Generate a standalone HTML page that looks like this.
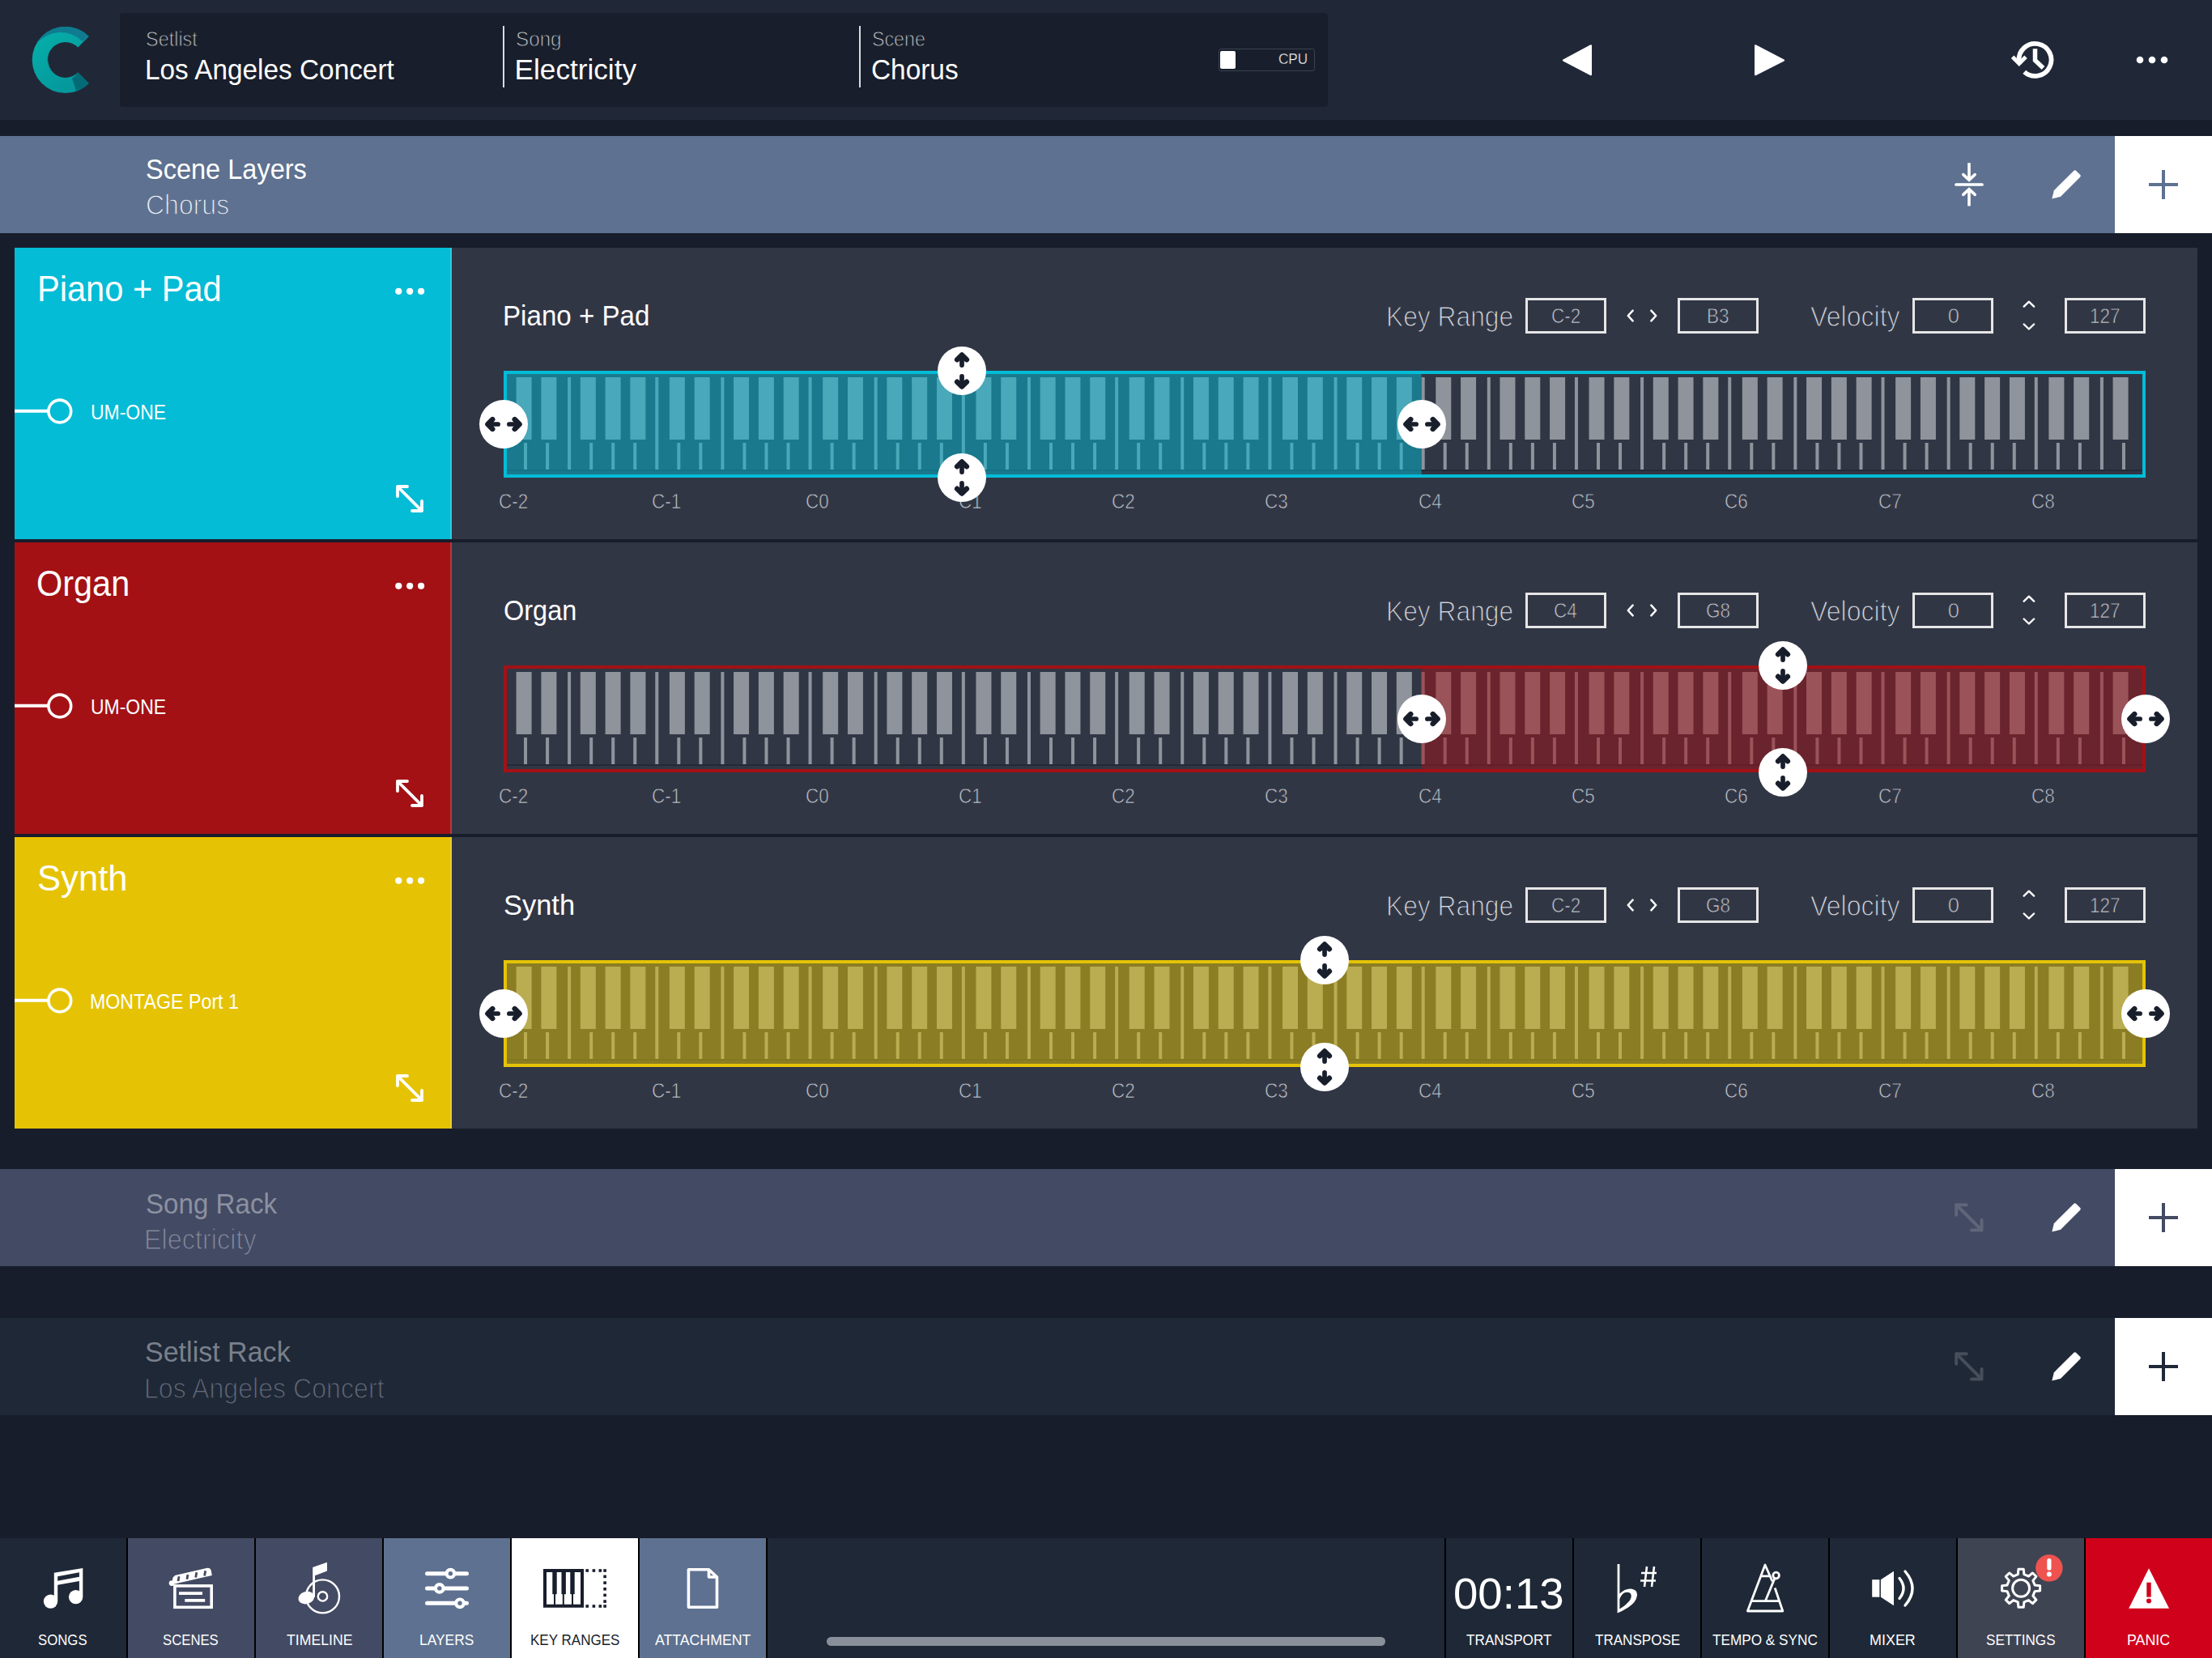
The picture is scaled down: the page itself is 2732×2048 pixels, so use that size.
<!DOCTYPE html><html><head><meta charset="utf-8"><style>
*{margin:0;padding:0;box-sizing:border-box}
html,body{width:2732px;height:2048px;overflow:hidden;background:#181d2b;font-family:"Liberation Sans",sans-serif}
.a{position:absolute}
.t{position:absolute;white-space:nowrap;line-height:1}
svg{position:absolute;overflow:visible}
.box{position:absolute;border:3px solid #e6e6e6}
</style></head><body>
<div class="a" style="left:0;top:0;width:2732px;height:148px;background:#202838"></div>
<div class="a" style="left:148px;top:16px;width:1492px;height:116px;background:#181e2b;border-radius:4px"></div>
<svg style="left:30px;top:25px" width="100" height="100" viewBox="30 25 100 100">
<defs><linearGradient id="lg" x1="0" y1="0" x2="0.6" y2="1">
<stop offset="0" stop-color="#06b1aa"/><stop offset="1" stop-color="#05979c"/></linearGradient></defs>
<path d="M109.7 45.0 A41 41 0 1 0 109.7 103.0 L96.3 89.6 A22 22 0 1 1 96.3 58.4 Z" fill="url(#lg)"/>
<path d="M45.2 53.5 A41 41 0 0 1 109.7 45.0 L101.8 50.9 A39.15 39.15 0 0 0 45.2 53.5 Z" fill="#0f7b90"/>
<path d="M61.4 62.4 A24.9 24.9 0 0 0 69.7 93.1 A22 22 0 0 1 61.4 62.4 Z" fill="#07908e"/>
<path d="M89.1 96.8 L94.2 112.5 A41 41 0 0 0 109.7 103.0 L96.3 89.6 A22 22 0 0 1 89.1 96.8 Z" fill="#026b76"/>
</svg>
<div class="a" style="left:621px;top:32px;width:2px;height:76px;background:#d8dce2"></div>
<div class="a" style="left:1061px;top:32px;width:2px;height:76px;background:#d8dce2"></div>
<div class="t" style="left:179.60px;top:36.35px;font-size:25.58px;transform:scaleX(0.9163);transform-origin:0 0;color:#c4c8cf;-webkit-text-stroke:0.9px #181e2b;">Setlist</div>
<div class="t" style="left:179.15px;top:68.42px;font-size:35.17px;transform:scaleX(0.9487);transform-origin:0 0;color:#ffffff;">Los Angeles Concert</div>
<div class="t" style="left:636.96px;top:36.35px;font-size:25.58px;transform:scaleX(0.9471);transform-origin:0 0;color:#c4c8cf;-webkit-text-stroke:0.9px #181e2b;">Song</div>
<div class="t" style="left:635.60px;top:68.42px;font-size:35.17px;color:#ffffff;">Electricity</div>
<div class="t" style="left:1077.11px;top:36.35px;font-size:25.58px;transform:scaleX(0.9086);transform-origin:0 0;color:#c4c8cf;-webkit-text-stroke:0.9px #181e2b;">Scene</div>
<div class="t" style="left:1076.49px;top:68.42px;font-size:35.17px;transform:scaleX(0.9493);transform-origin:0 0;color:#ffffff;">Chorus</div>
<div class="a" style="left:1504.5px;top:60px;width:119px;height:27.6px;border:1.8px solid #3a4150;border-radius:3px"></div>
<div class="a" style="left:1507px;top:62.9px;width:18.6px;height:22px;background:#fff;border-radius:2px"></div>
<div class="t" style="left:1579.37px;top:64.05px;font-size:18.60px;transform:scaleX(0.9210);transform-origin:0 0;color:#ffffff;-webkit-text-stroke:0.4px #181e2b;">CPU</div>
<svg style="left:1920px;top:50px" width="300" height="50" viewBox="1920 50 300 50"><path d="M1966 56.5 L1966 92 Q1966 94 1964 93 L1930.5 75.5 Q1929 74.5 1930.5 73.5 L1964 55.5 Q1966 54.5 1966 56.5Z" fill="#fff"/><path d="M2167 56.5 L2167 92 Q2167 94 2169 93 L2203.5 75.5 Q2205 74.5 2203.5 73.5 L2169 55.5 Q2167 54.5 2167 56.5Z" fill="#fff"/></svg>
<svg style="left:2470px;top:40px" width="80" height="70" viewBox="2470 40 80 70"><path d="M2493.53 75.5 A20 20 0 1 1 2500.25 88.9" fill="none" stroke="#fff" stroke-width="5.8"/><path d="M2483.9 72.1 L2493.85 82 L2503.8 72.1 L2500.3 68.6 L2493.85 75 L2487.4 68.6 Z" fill="#fff"/><path d="M2513.5 60.3 V74.5 L2523.5 84" fill="none" stroke="#fff" stroke-width="5.5"/></svg>
<svg style="left:2630px;top:64px" width="60" height="20" viewBox="2630 64 60 20"><circle cx="2643" cy="74" r="4.3" fill="#fff"/><circle cx="2658" cy="74" r="4.3" fill="#fff"/><circle cx="2673" cy="74" r="4.3" fill="#fff"/></svg>
<div class="a" style="left:0;top:168px;width:2612px;height:120px;background:#5e7190"></div>
<div class="a" style="left:2612px;top:168px;width:120px;height:120px;background:#fff"></div>
<div class="t" style="left:179.90px;top:192.49px;font-size:34.74px;transform:scaleX(0.9362);transform-origin:0 0;color:#ffffff;">Scene Layers</div>
<div class="t" style="left:179.98px;top:236.08px;font-size:35.47px;transform:scaleX(0.9022);transform-origin:0 0;color:#eef1f5;-webkit-text-stroke:1.3px #5e7190;">Chorus</div>
<svg style="left:2400px;top:195px" width="70" height="70" viewBox="2400 195 70 70"><path d="M2416 228 H2448" stroke="#fff" stroke-width="3.7" stroke-linecap="round"/><path d="M2432 201.2 V221 M2432 235 V254.6" stroke="#fff" stroke-width="3.6"/><path d="M2424.8 215.6 L2432 222.3 L2439.2 215.6 M2424.8 240.4 L2432 233.7 L2439.2 240.4" fill="none" stroke="#fff" stroke-width="3.6" stroke-linecap="round"/></svg>
<svg style="left:2525px;top:200px" width="55" height="55" viewBox="2525 200 55 55"><path d="M2534.3 245.4 L2536.9 235.2 L2561.2 210.9 Q2562.7 209.6 2564.2 210.9 L2569.1 215.8 Q2570.4 217.3 2569.1 218.8 L2544.9 243.0 Z" fill="#fff"/></svg>
<svg style="left:2650px;top:206px" width="44" height="44" viewBox="2650 206 44 44"><path d="M2654 228 H2690 M2672 210 V246" stroke="#5e7190" stroke-width="4"/></svg>
<div class="a" style="left:18px;top:306px;width:2696px;height:360px;background:#313645"></div>
<div class="a" style="left:18px;top:306px;width:540px;height:360px;background:#04bcd6"></div>
<div class="a" style="left:556px;top:306px;width:2px;height:360px;background:rgba(255,255,255,0.18)"></div>
<div class="t" style="left:46.29px;top:334.84px;font-size:43.90px;transform:scaleX(0.9475);transform-origin:0 0;color:#ffffff;">Piano + Pad</div>
<svg style="left:480px;top:350px" width="50" height="20" viewBox="480 350 50 20"><circle cx="492.3" cy="359.8" r="4.1" fill="#fff"/><circle cx="506.2" cy="359.8" r="4.1" fill="#fff"/><circle cx="520.1" cy="359.8" r="4.1" fill="#fff"/></svg>
<svg style="left:18px;top:490px" width="80" height="36" viewBox="18 490 80 36"><path d="M18 507.7 H60" stroke="#fff" stroke-width="4"/><circle cx="73.8" cy="508" r="13.9" fill="none" stroke="#fff" stroke-width="3.6"/></svg>
<div class="t" style="left:111.60px;top:496.67px;font-size:25.44px;transform:scaleX(0.9023);transform-origin:0 0;color:#ffffff;">UM-ONE</div>
<svg style="left:487.00px;top:597.00px" width="40.00" height="40.00" viewBox="0 0 40 40"><path d="M4 16V4H16M4 4L34 34M22 34H34V22" fill="none" stroke="#ffffff" stroke-width="3.8" stroke-linecap="round" stroke-linejoin="round"/></svg>
<div class="t" style="left:620.54px;top:372.77px;font-size:34.88px;transform:scaleX(0.9501);transform-origin:0 0;color:#ffffff;">Piano + Pad</div>
<div class="t" style="left:1712.09px;top:372.60px;font-size:35.32px;transform:scaleX(0.8992);transform-origin:0 0;color:#d4d7dc;-webkit-text-stroke:1.2px #313645;">Key Range</div>
<div class="box" style="left:1884px;top:368px;width:100px;height:44px"></div>
<div class="t" style="left:1915.92px;top:378.35px;font-size:25.58px;transform:scaleX(0.8800);transform-origin:0 0;color:#c8ccd2;-webkit-text-stroke:0.75px #313645;">C-2</div>
<div class="box" style="left:2072px;top:368px;width:100px;height:44px"></div>
<div class="t" style="left:2107.83px;top:378.35px;font-size:25.58px;transform:scaleX(0.8800);transform-origin:0 0;color:#c8ccd2;-webkit-text-stroke:0.75px #313645;">B3</div>
<div class="box" style="left:2362px;top:368px;width:100px;height:44px"></div>
<div class="t" style="left:2405.63px;top:378.35px;font-size:25.58px;color:#c8ccd2;-webkit-text-stroke:0.75px #313645;">0</div>
<div class="box" style="left:2550px;top:368px;width:100px;height:44px"></div>
<div class="t" style="left:2580.99px;top:378.35px;font-size:25.58px;transform:scaleX(0.8800);transform-origin:0 0;color:#c8ccd2;-webkit-text-stroke:0.75px #313645;">127</div>
<svg style="left:2000px;top:380px" width="56" height="20" viewBox="2000 380 56 20"><path d="M2016.6 383.7 L2010.8 390 L2016.6 396.3 M2039.4 383.7 L2045.2 390 L2039.4 396.3" fill="none" stroke="#fff" stroke-width="2.5" stroke-linecap="round" stroke-linejoin="round"/></svg>
<div class="t" style="left:2235.82px;top:372.90px;font-size:35.32px;transform:scaleX(0.9091);transform-origin:0 0;color:#d4d7dc;-webkit-text-stroke:1.2px #313645;">Velocity</div>
<svg style="left:2490px;top:368px" width="32" height="44" viewBox="2490 368 32 44"><path d="M2499.7 378.7 L2505.9 372.7 L2512.1 378.7 M2499.7 400.5 L2505.9 406.5 L2512.1 400.5" fill="none" stroke="#fff" stroke-width="2.4" stroke-linecap="round" stroke-linejoin="round"/></svg>
<svg class="kb" style="left:622.0px;top:458px" width="2028.0" height="132" viewBox="0 0 2028.0 132"><rect x="4" y="122" width="2020.0" height="2" fill="#232a38"/><g fill="#8f949c"><rect x="25.04" y="89" width="4" height="33"/><rect x="52.08" y="89" width="4" height="33"/><rect x="79.12" y="8" width="4" height="114"/><rect x="106.16" y="89" width="4" height="33"/><rect x="133.20" y="89" width="4" height="33"/><rect x="160.24" y="89" width="4" height="33"/><rect x="187.28" y="8" width="4" height="114"/><rect x="214.32" y="89" width="4" height="33"/><rect x="241.36" y="89" width="4" height="33"/><rect x="268.40" y="8" width="4" height="114"/><rect x="295.44" y="89" width="4" height="33"/><rect x="322.48" y="89" width="4" height="33"/><rect x="349.52" y="89" width="4" height="33"/><rect x="376.56" y="8" width="4" height="114"/><rect x="403.60" y="89" width="4" height="33"/><rect x="430.64" y="89" width="4" height="33"/><rect x="457.68" y="8" width="4" height="114"/><rect x="484.72" y="89" width="4" height="33"/><rect x="511.76" y="89" width="4" height="33"/><rect x="538.80" y="89" width="4" height="33"/><rect x="565.84" y="8" width="4" height="114"/><rect x="592.88" y="89" width="4" height="33"/><rect x="619.92" y="89" width="4" height="33"/><rect x="646.96" y="8" width="4" height="114"/><rect x="674.00" y="89" width="4" height="33"/><rect x="701.04" y="89" width="4" height="33"/><rect x="728.08" y="89" width="4" height="33"/><rect x="755.12" y="8" width="4" height="114"/><rect x="782.16" y="89" width="4" height="33"/><rect x="809.20" y="89" width="4" height="33"/><rect x="836.24" y="8" width="4" height="114"/><rect x="863.28" y="89" width="4" height="33"/><rect x="890.32" y="89" width="4" height="33"/><rect x="917.36" y="89" width="4" height="33"/><rect x="944.40" y="8" width="4" height="114"/><rect x="971.44" y="89" width="4" height="33"/><rect x="998.48" y="89" width="4" height="33"/><rect x="1025.52" y="8" width="4" height="114"/><rect x="1052.56" y="89" width="4" height="33"/><rect x="1079.60" y="89" width="4" height="33"/><rect x="1106.64" y="89" width="4" height="33"/><rect x="1133.68" y="8" width="4" height="114"/><rect x="1160.72" y="89" width="4" height="33"/><rect x="1187.76" y="89" width="4" height="33"/><rect x="1214.80" y="8" width="4" height="114"/><rect x="1241.84" y="89" width="4" height="33"/><rect x="1268.88" y="89" width="4" height="33"/><rect x="1295.92" y="89" width="4" height="33"/><rect x="1322.96" y="8" width="4" height="114"/><rect x="1350.00" y="89" width="4" height="33"/><rect x="1377.04" y="89" width="4" height="33"/><rect x="1404.08" y="8" width="4" height="114"/><rect x="1431.12" y="89" width="4" height="33"/><rect x="1458.16" y="89" width="4" height="33"/><rect x="1485.20" y="89" width="4" height="33"/><rect x="1512.24" y="8" width="4" height="114"/><rect x="1539.28" y="89" width="4" height="33"/><rect x="1566.32" y="89" width="4" height="33"/><rect x="1593.36" y="8" width="4" height="114"/><rect x="1620.40" y="89" width="4" height="33"/><rect x="1647.44" y="89" width="4" height="33"/><rect x="1674.48" y="89" width="4" height="33"/><rect x="1701.52" y="8" width="4" height="114"/><rect x="1728.56" y="89" width="4" height="33"/><rect x="1755.60" y="89" width="4" height="33"/><rect x="1782.64" y="8" width="4" height="114"/><rect x="1809.68" y="89" width="4" height="33"/><rect x="1836.72" y="89" width="4" height="33"/><rect x="1863.76" y="89" width="4" height="33"/><rect x="1890.80" y="8" width="4" height="114"/><rect x="1917.84" y="89" width="4" height="33"/><rect x="1944.88" y="89" width="4" height="33"/><rect x="1971.92" y="8" width="4" height="114"/><rect x="1998.96" y="89" width="4" height="33"/><rect x="15.60" y="8" width="19" height="77"/><rect x="46.40" y="8" width="19" height="77"/><rect x="94.80" y="8" width="19" height="77"/><rect x="125.60" y="8" width="19" height="77"/><rect x="156.40" y="8" width="19" height="77"/><rect x="204.88" y="8" width="19" height="77"/><rect x="235.68" y="8" width="19" height="77"/><rect x="284.08" y="8" width="19" height="77"/><rect x="314.88" y="8" width="19" height="77"/><rect x="345.68" y="8" width="19" height="77"/><rect x="394.16" y="8" width="19" height="77"/><rect x="424.96" y="8" width="19" height="77"/><rect x="473.36" y="8" width="19" height="77"/><rect x="504.16" y="8" width="19" height="77"/><rect x="534.96" y="8" width="19" height="77"/><rect x="583.44" y="8" width="19" height="77"/><rect x="614.24" y="8" width="19" height="77"/><rect x="662.64" y="8" width="19" height="77"/><rect x="693.44" y="8" width="19" height="77"/><rect x="724.24" y="8" width="19" height="77"/><rect x="772.72" y="8" width="19" height="77"/><rect x="803.52" y="8" width="19" height="77"/><rect x="851.92" y="8" width="19" height="77"/><rect x="882.72" y="8" width="19" height="77"/><rect x="913.52" y="8" width="19" height="77"/><rect x="962.00" y="8" width="19" height="77"/><rect x="992.80" y="8" width="19" height="77"/><rect x="1041.20" y="8" width="19" height="77"/><rect x="1072.00" y="8" width="19" height="77"/><rect x="1102.80" y="8" width="19" height="77"/><rect x="1151.28" y="8" width="19" height="77"/><rect x="1182.08" y="8" width="19" height="77"/><rect x="1230.48" y="8" width="19" height="77"/><rect x="1261.28" y="8" width="19" height="77"/><rect x="1292.08" y="8" width="19" height="77"/><rect x="1340.56" y="8" width="19" height="77"/><rect x="1371.36" y="8" width="19" height="77"/><rect x="1419.76" y="8" width="19" height="77"/><rect x="1450.56" y="8" width="19" height="77"/><rect x="1481.36" y="8" width="19" height="77"/><rect x="1529.84" y="8" width="19" height="77"/><rect x="1560.64" y="8" width="19" height="77"/><rect x="1609.04" y="8" width="19" height="77"/><rect x="1639.84" y="8" width="19" height="77"/><rect x="1670.64" y="8" width="19" height="77"/><rect x="1719.12" y="8" width="19" height="77"/><rect x="1749.92" y="8" width="19" height="77"/><rect x="1798.32" y="8" width="19" height="77"/><rect x="1829.12" y="8" width="19" height="77"/><rect x="1859.92" y="8" width="19" height="77"/><rect x="1908.40" y="8" width="19" height="77"/><rect x="1939.20" y="8" width="19" height="77"/><rect x="1987.60" y="8" width="19" height="77"/></g><rect x="4.00" y="4" width="1129.68" height="124" fill="#04bcd6" fill-opacity="0.5"/><rect x="2" y="2" width="2024.0" height="128" fill="none" stroke="#04bcd6" stroke-width="4"/></svg>
<div class="t" style="left:616.00px;top:606.21px;font-size:26.45px;transform:scaleX(0.8500);transform-origin:0 0;color:#c2c6cc;-webkit-text-stroke:0.75px #313645;">C-2</div>
<div class="t" style="left:805.27px;top:606.21px;font-size:26.45px;transform:scaleX(0.8500);transform-origin:0 0;color:#c2c6cc;-webkit-text-stroke:0.75px #313645;">C-1</div>
<div class="t" style="left:994.55px;top:606.21px;font-size:26.45px;transform:scaleX(0.8500);transform-origin:0 0;color:#c2c6cc;-webkit-text-stroke:0.75px #313645;">C0</div>
<div class="t" style="left:1183.84px;top:606.21px;font-size:26.45px;transform:scaleX(0.8500);transform-origin:0 0;color:#c2c6cc;-webkit-text-stroke:0.75px #313645;">C1</div>
<div class="t" style="left:1373.11px;top:606.21px;font-size:26.45px;transform:scaleX(0.8500);transform-origin:0 0;color:#c2c6cc;-webkit-text-stroke:0.75px #313645;">C2</div>
<div class="t" style="left:1562.39px;top:606.21px;font-size:26.45px;transform:scaleX(0.8500);transform-origin:0 0;color:#c2c6cc;-webkit-text-stroke:0.75px #313645;">C3</div>
<div class="t" style="left:1751.67px;top:606.21px;font-size:26.45px;transform:scaleX(0.8500);transform-origin:0 0;color:#c2c6cc;-webkit-text-stroke:0.75px #313645;">C4</div>
<div class="t" style="left:1940.95px;top:606.21px;font-size:26.45px;transform:scaleX(0.8500);transform-origin:0 0;color:#c2c6cc;-webkit-text-stroke:0.75px #313645;">C5</div>
<div class="t" style="left:2130.23px;top:606.21px;font-size:26.45px;transform:scaleX(0.8500);transform-origin:0 0;color:#c2c6cc;-webkit-text-stroke:0.75px #313645;">C6</div>
<div class="t" style="left:2319.51px;top:606.21px;font-size:26.45px;transform:scaleX(0.8500);transform-origin:0 0;color:#c2c6cc;-webkit-text-stroke:0.75px #313645;">C7</div>
<div class="t" style="left:2508.80px;top:606.21px;font-size:26.45px;transform:scaleX(0.8500);transform-origin:0 0;color:#c2c6cc;-webkit-text-stroke:0.75px #313645;">C8</div>
<svg class="hd" style="left:591.0px;top:493px" width="62" height="62" viewBox="-31 -31 62 62"><circle r="30" fill="#fff"/><g fill="none" stroke="#181e2b" stroke-linecap="round" stroke-linejoin="round"><path d="M-13.7 -5.9L-19.6 0L-13.7 5.9M13.7 -5.9L19.6 0L13.7 5.9" stroke-width="6.4"/><path d="M-19 0H-6.9M19 0H6.9" stroke-width="5.7"/></g></svg>
<svg class="hd" style="left:1724.68px;top:493px" width="62" height="62" viewBox="-31 -31 62 62"><circle r="30" fill="#fff"/><g fill="none" stroke="#181e2b" stroke-linecap="round" stroke-linejoin="round"><path d="M-13.7 -5.9L-19.6 0L-13.7 5.9M13.7 -5.9L19.6 0L13.7 5.9" stroke-width="6.4"/><path d="M-19 0H-6.9M19 0H6.9" stroke-width="5.7"/></g></svg>
<svg class="hd" style="left:1156.8400000000001px;top:427px" width="62" height="62" viewBox="-31 -31 62 62"><circle r="30" fill="#fff"/><g fill="none" stroke="#181e2b" stroke-linecap="round" stroke-linejoin="round"><path d="M-5.9 -13.7L0 -19.6L5.9 -13.7M-5.9 13.7L0 19.6L5.9 13.7" stroke-width="6.4"/><path d="M0 -19V-6.9M0 19V6.9" stroke-width="5.7"/></g></svg>
<svg class="hd" style="left:1156.8400000000001px;top:559px" width="62" height="62" viewBox="-31 -31 62 62"><circle r="30" fill="#fff"/><g fill="none" stroke="#181e2b" stroke-linecap="round" stroke-linejoin="round"><path d="M-5.9 -13.7L0 -19.6L5.9 -13.7M-5.9 13.7L0 19.6L5.9 13.7" stroke-width="6.4"/><path d="M0 -19V-6.9M0 19V6.9" stroke-width="5.7"/></g></svg>
<div class="a" style="left:18px;top:670px;width:2696px;height:360px;background:#313645"></div>
<div class="a" style="left:18px;top:670px;width:540px;height:360px;background:#a31115"></div>
<div class="a" style="left:556px;top:670px;width:2px;height:360px;background:rgba(255,255,255,0.18)"></div>
<div class="t" style="left:45.42px;top:698.84px;font-size:43.90px;transform:scaleX(0.9446);transform-origin:0 0;color:#ffffff;">Organ</div>
<svg style="left:480px;top:714px" width="50" height="20" viewBox="480 714 50 20"><circle cx="492.3" cy="723.8" r="4.1" fill="#fff"/><circle cx="506.2" cy="723.8" r="4.1" fill="#fff"/><circle cx="520.1" cy="723.8" r="4.1" fill="#fff"/></svg>
<svg style="left:18px;top:854px" width="80" height="36" viewBox="18 854 80 36"><path d="M18 871.7 H60" stroke="#fff" stroke-width="4"/><circle cx="73.8" cy="872" r="13.9" fill="none" stroke="#fff" stroke-width="3.6"/></svg>
<div class="t" style="left:111.60px;top:860.67px;font-size:25.44px;transform:scaleX(0.9023);transform-origin:0 0;color:#ffffff;">UM-ONE</div>
<svg style="left:487.00px;top:961.00px" width="40.00" height="40.00" viewBox="0 0 40 40"><path d="M4 16V4H16M4 4L34 34M22 34H34V22" fill="none" stroke="#ffffff" stroke-width="3.8" stroke-linecap="round" stroke-linejoin="round"/></svg>
<div class="t" style="left:621.81px;top:736.77px;font-size:34.88px;transform:scaleX(0.9315);transform-origin:0 0;color:#ffffff;">Organ</div>
<div class="t" style="left:1712.09px;top:736.60px;font-size:35.32px;transform:scaleX(0.8992);transform-origin:0 0;color:#d4d7dc;-webkit-text-stroke:1.2px #313645;">Key Range</div>
<div class="box" style="left:1884px;top:732px;width:100px;height:44px"></div>
<div class="t" style="left:1919.44px;top:742.35px;font-size:25.58px;transform:scaleX(0.8800);transform-origin:0 0;color:#c8ccd2;-webkit-text-stroke:0.75px #313645;">C4</div>
<div class="box" style="left:2072px;top:732px;width:100px;height:44px"></div>
<div class="t" style="left:2106.95px;top:742.35px;font-size:25.58px;transform:scaleX(0.8800);transform-origin:0 0;color:#c8ccd2;-webkit-text-stroke:0.75px #313645;">G8</div>
<div class="box" style="left:2362px;top:732px;width:100px;height:44px"></div>
<div class="t" style="left:2405.63px;top:742.35px;font-size:25.58px;color:#c8ccd2;-webkit-text-stroke:0.75px #313645;">0</div>
<div class="box" style="left:2550px;top:732px;width:100px;height:44px"></div>
<div class="t" style="left:2580.99px;top:742.35px;font-size:25.58px;transform:scaleX(0.8800);transform-origin:0 0;color:#c8ccd2;-webkit-text-stroke:0.75px #313645;">127</div>
<svg style="left:2000px;top:744px" width="56" height="20" viewBox="2000 744 56 20"><path d="M2016.6 747.7 L2010.8 754 L2016.6 760.3 M2039.4 747.7 L2045.2 754 L2039.4 760.3" fill="none" stroke="#fff" stroke-width="2.5" stroke-linecap="round" stroke-linejoin="round"/></svg>
<div class="t" style="left:2235.82px;top:736.90px;font-size:35.32px;transform:scaleX(0.9091);transform-origin:0 0;color:#d4d7dc;-webkit-text-stroke:1.2px #313645;">Velocity</div>
<svg style="left:2490px;top:732px" width="32" height="44" viewBox="2490 732 32 44"><path d="M2499.7 742.7 L2505.9 736.7 L2512.1 742.7 M2499.7 764.5 L2505.9 770.5 L2512.1 764.5" fill="none" stroke="#fff" stroke-width="2.4" stroke-linecap="round" stroke-linejoin="round"/></svg>
<svg class="kb" style="left:622.0px;top:822px" width="2028.0" height="132" viewBox="0 0 2028.0 132"><rect x="4" y="122" width="2020.0" height="2" fill="#232a38"/><g fill="#8f949c"><rect x="25.04" y="89" width="4" height="33"/><rect x="52.08" y="89" width="4" height="33"/><rect x="79.12" y="8" width="4" height="114"/><rect x="106.16" y="89" width="4" height="33"/><rect x="133.20" y="89" width="4" height="33"/><rect x="160.24" y="89" width="4" height="33"/><rect x="187.28" y="8" width="4" height="114"/><rect x="214.32" y="89" width="4" height="33"/><rect x="241.36" y="89" width="4" height="33"/><rect x="268.40" y="8" width="4" height="114"/><rect x="295.44" y="89" width="4" height="33"/><rect x="322.48" y="89" width="4" height="33"/><rect x="349.52" y="89" width="4" height="33"/><rect x="376.56" y="8" width="4" height="114"/><rect x="403.60" y="89" width="4" height="33"/><rect x="430.64" y="89" width="4" height="33"/><rect x="457.68" y="8" width="4" height="114"/><rect x="484.72" y="89" width="4" height="33"/><rect x="511.76" y="89" width="4" height="33"/><rect x="538.80" y="89" width="4" height="33"/><rect x="565.84" y="8" width="4" height="114"/><rect x="592.88" y="89" width="4" height="33"/><rect x="619.92" y="89" width="4" height="33"/><rect x="646.96" y="8" width="4" height="114"/><rect x="674.00" y="89" width="4" height="33"/><rect x="701.04" y="89" width="4" height="33"/><rect x="728.08" y="89" width="4" height="33"/><rect x="755.12" y="8" width="4" height="114"/><rect x="782.16" y="89" width="4" height="33"/><rect x="809.20" y="89" width="4" height="33"/><rect x="836.24" y="8" width="4" height="114"/><rect x="863.28" y="89" width="4" height="33"/><rect x="890.32" y="89" width="4" height="33"/><rect x="917.36" y="89" width="4" height="33"/><rect x="944.40" y="8" width="4" height="114"/><rect x="971.44" y="89" width="4" height="33"/><rect x="998.48" y="89" width="4" height="33"/><rect x="1025.52" y="8" width="4" height="114"/><rect x="1052.56" y="89" width="4" height="33"/><rect x="1079.60" y="89" width="4" height="33"/><rect x="1106.64" y="89" width="4" height="33"/><rect x="1133.68" y="8" width="4" height="114"/><rect x="1160.72" y="89" width="4" height="33"/><rect x="1187.76" y="89" width="4" height="33"/><rect x="1214.80" y="8" width="4" height="114"/><rect x="1241.84" y="89" width="4" height="33"/><rect x="1268.88" y="89" width="4" height="33"/><rect x="1295.92" y="89" width="4" height="33"/><rect x="1322.96" y="8" width="4" height="114"/><rect x="1350.00" y="89" width="4" height="33"/><rect x="1377.04" y="89" width="4" height="33"/><rect x="1404.08" y="8" width="4" height="114"/><rect x="1431.12" y="89" width="4" height="33"/><rect x="1458.16" y="89" width="4" height="33"/><rect x="1485.20" y="89" width="4" height="33"/><rect x="1512.24" y="8" width="4" height="114"/><rect x="1539.28" y="89" width="4" height="33"/><rect x="1566.32" y="89" width="4" height="33"/><rect x="1593.36" y="8" width="4" height="114"/><rect x="1620.40" y="89" width="4" height="33"/><rect x="1647.44" y="89" width="4" height="33"/><rect x="1674.48" y="89" width="4" height="33"/><rect x="1701.52" y="8" width="4" height="114"/><rect x="1728.56" y="89" width="4" height="33"/><rect x="1755.60" y="89" width="4" height="33"/><rect x="1782.64" y="8" width="4" height="114"/><rect x="1809.68" y="89" width="4" height="33"/><rect x="1836.72" y="89" width="4" height="33"/><rect x="1863.76" y="89" width="4" height="33"/><rect x="1890.80" y="8" width="4" height="114"/><rect x="1917.84" y="89" width="4" height="33"/><rect x="1944.88" y="89" width="4" height="33"/><rect x="1971.92" y="8" width="4" height="114"/><rect x="1998.96" y="89" width="4" height="33"/><rect x="15.60" y="8" width="19" height="77"/><rect x="46.40" y="8" width="19" height="77"/><rect x="94.80" y="8" width="19" height="77"/><rect x="125.60" y="8" width="19" height="77"/><rect x="156.40" y="8" width="19" height="77"/><rect x="204.88" y="8" width="19" height="77"/><rect x="235.68" y="8" width="19" height="77"/><rect x="284.08" y="8" width="19" height="77"/><rect x="314.88" y="8" width="19" height="77"/><rect x="345.68" y="8" width="19" height="77"/><rect x="394.16" y="8" width="19" height="77"/><rect x="424.96" y="8" width="19" height="77"/><rect x="473.36" y="8" width="19" height="77"/><rect x="504.16" y="8" width="19" height="77"/><rect x="534.96" y="8" width="19" height="77"/><rect x="583.44" y="8" width="19" height="77"/><rect x="614.24" y="8" width="19" height="77"/><rect x="662.64" y="8" width="19" height="77"/><rect x="693.44" y="8" width="19" height="77"/><rect x="724.24" y="8" width="19" height="77"/><rect x="772.72" y="8" width="19" height="77"/><rect x="803.52" y="8" width="19" height="77"/><rect x="851.92" y="8" width="19" height="77"/><rect x="882.72" y="8" width="19" height="77"/><rect x="913.52" y="8" width="19" height="77"/><rect x="962.00" y="8" width="19" height="77"/><rect x="992.80" y="8" width="19" height="77"/><rect x="1041.20" y="8" width="19" height="77"/><rect x="1072.00" y="8" width="19" height="77"/><rect x="1102.80" y="8" width="19" height="77"/><rect x="1151.28" y="8" width="19" height="77"/><rect x="1182.08" y="8" width="19" height="77"/><rect x="1230.48" y="8" width="19" height="77"/><rect x="1261.28" y="8" width="19" height="77"/><rect x="1292.08" y="8" width="19" height="77"/><rect x="1340.56" y="8" width="19" height="77"/><rect x="1371.36" y="8" width="19" height="77"/><rect x="1419.76" y="8" width="19" height="77"/><rect x="1450.56" y="8" width="19" height="77"/><rect x="1481.36" y="8" width="19" height="77"/><rect x="1529.84" y="8" width="19" height="77"/><rect x="1560.64" y="8" width="19" height="77"/><rect x="1609.04" y="8" width="19" height="77"/><rect x="1639.84" y="8" width="19" height="77"/><rect x="1670.64" y="8" width="19" height="77"/><rect x="1719.12" y="8" width="19" height="77"/><rect x="1749.92" y="8" width="19" height="77"/><rect x="1798.32" y="8" width="19" height="77"/><rect x="1829.12" y="8" width="19" height="77"/><rect x="1859.92" y="8" width="19" height="77"/><rect x="1908.40" y="8" width="19" height="77"/><rect x="1939.20" y="8" width="19" height="77"/><rect x="1987.60" y="8" width="19" height="77"/></g><rect x="1133.68" y="4" width="890.32" height="124" fill="#a31115" fill-opacity="0.5"/><rect x="2" y="2" width="2024.0" height="128" fill="none" stroke="#a31115" stroke-width="4"/></svg>
<div class="t" style="left:616.00px;top:970.21px;font-size:26.45px;transform:scaleX(0.8500);transform-origin:0 0;color:#c2c6cc;-webkit-text-stroke:0.75px #313645;">C-2</div>
<div class="t" style="left:805.27px;top:970.21px;font-size:26.45px;transform:scaleX(0.8500);transform-origin:0 0;color:#c2c6cc;-webkit-text-stroke:0.75px #313645;">C-1</div>
<div class="t" style="left:994.55px;top:970.21px;font-size:26.45px;transform:scaleX(0.8500);transform-origin:0 0;color:#c2c6cc;-webkit-text-stroke:0.75px #313645;">C0</div>
<div class="t" style="left:1183.84px;top:970.21px;font-size:26.45px;transform:scaleX(0.8500);transform-origin:0 0;color:#c2c6cc;-webkit-text-stroke:0.75px #313645;">C1</div>
<div class="t" style="left:1373.11px;top:970.21px;font-size:26.45px;transform:scaleX(0.8500);transform-origin:0 0;color:#c2c6cc;-webkit-text-stroke:0.75px #313645;">C2</div>
<div class="t" style="left:1562.39px;top:970.21px;font-size:26.45px;transform:scaleX(0.8500);transform-origin:0 0;color:#c2c6cc;-webkit-text-stroke:0.75px #313645;">C3</div>
<div class="t" style="left:1751.67px;top:970.21px;font-size:26.45px;transform:scaleX(0.8500);transform-origin:0 0;color:#c2c6cc;-webkit-text-stroke:0.75px #313645;">C4</div>
<div class="t" style="left:1940.95px;top:970.21px;font-size:26.45px;transform:scaleX(0.8500);transform-origin:0 0;color:#c2c6cc;-webkit-text-stroke:0.75px #313645;">C5</div>
<div class="t" style="left:2130.23px;top:970.21px;font-size:26.45px;transform:scaleX(0.8500);transform-origin:0 0;color:#c2c6cc;-webkit-text-stroke:0.75px #313645;">C6</div>
<div class="t" style="left:2319.51px;top:970.21px;font-size:26.45px;transform:scaleX(0.8500);transform-origin:0 0;color:#c2c6cc;-webkit-text-stroke:0.75px #313645;">C7</div>
<div class="t" style="left:2508.80px;top:970.21px;font-size:26.45px;transform:scaleX(0.8500);transform-origin:0 0;color:#c2c6cc;-webkit-text-stroke:0.75px #313645;">C8</div>
<svg class="hd" style="left:1724.68px;top:857px" width="62" height="62" viewBox="-31 -31 62 62"><circle r="30" fill="#fff"/><g fill="none" stroke="#181e2b" stroke-linecap="round" stroke-linejoin="round"><path d="M-13.7 -5.9L-19.6 0L-13.7 5.9M13.7 -5.9L19.6 0L13.7 5.9" stroke-width="6.4"/><path d="M-19 0H-6.9M19 0H6.9" stroke-width="5.7"/></g></svg>
<svg class="hd" style="left:2619.0px;top:857px" width="62" height="62" viewBox="-31 -31 62 62"><circle r="30" fill="#fff"/><g fill="none" stroke="#181e2b" stroke-linecap="round" stroke-linejoin="round"><path d="M-13.7 -5.9L-19.6 0L-13.7 5.9M13.7 -5.9L19.6 0L13.7 5.9" stroke-width="6.4"/><path d="M-19 0H-6.9M19 0H6.9" stroke-width="5.7"/></g></svg>
<svg class="hd" style="left:2170.84px;top:791px" width="62" height="62" viewBox="-31 -31 62 62"><circle r="30" fill="#fff"/><g fill="none" stroke="#181e2b" stroke-linecap="round" stroke-linejoin="round"><path d="M-5.9 -13.7L0 -19.6L5.9 -13.7M-5.9 13.7L0 19.6L5.9 13.7" stroke-width="6.4"/><path d="M0 -19V-6.9M0 19V6.9" stroke-width="5.7"/></g></svg>
<svg class="hd" style="left:2170.84px;top:923px" width="62" height="62" viewBox="-31 -31 62 62"><circle r="30" fill="#fff"/><g fill="none" stroke="#181e2b" stroke-linecap="round" stroke-linejoin="round"><path d="M-5.9 -13.7L0 -19.6L5.9 -13.7M-5.9 13.7L0 19.6L5.9 13.7" stroke-width="6.4"/><path d="M0 -19V-6.9M0 19V6.9" stroke-width="5.7"/></g></svg>
<div class="a" style="left:18px;top:1034px;width:2696px;height:360px;background:#313645"></div>
<div class="a" style="left:18px;top:1034px;width:540px;height:360px;background:#e5c304"></div>
<div class="a" style="left:556px;top:1034px;width:2px;height:360px;background:rgba(255,255,255,0.18)"></div>
<div class="t" style="left:45.51px;top:1062.84px;font-size:43.90px;transform:scaleX(0.9944);transform-origin:0 0;color:#ffffff;">Synth</div>
<svg style="left:480px;top:1078px" width="50" height="20" viewBox="480 1078 50 20"><circle cx="492.3" cy="1087.8" r="4.1" fill="#fff"/><circle cx="506.2" cy="1087.8" r="4.1" fill="#fff"/><circle cx="520.1" cy="1087.8" r="4.1" fill="#fff"/></svg>
<svg style="left:18px;top:1218px" width="80" height="36" viewBox="18 1218 80 36"><path d="M18 1235.7 H60" stroke="#fff" stroke-width="4"/><circle cx="73.8" cy="1236" r="13.9" fill="none" stroke="#fff" stroke-width="3.6"/></svg>
<div class="t" style="left:111.48px;top:1224.67px;font-size:25.44px;transform:scaleX(0.9120);transform-origin:0 0;color:#ffffff;">MONTAGE Port 1</div>
<svg style="left:487.00px;top:1325.00px" width="40.00" height="40.00" viewBox="0 0 40 40"><path d="M4 16V4H16M4 4L34 34M22 34H34V22" fill="none" stroke="#ffffff" stroke-width="3.8" stroke-linecap="round" stroke-linejoin="round"/></svg>
<div class="t" style="left:621.72px;top:1100.77px;font-size:34.88px;transform:scaleX(0.9871);transform-origin:0 0;color:#ffffff;">Synth</div>
<div class="t" style="left:1712.09px;top:1100.60px;font-size:35.32px;transform:scaleX(0.8992);transform-origin:0 0;color:#d4d7dc;-webkit-text-stroke:1.2px #313645;">Key Range</div>
<div class="box" style="left:1884px;top:1096px;width:100px;height:44px"></div>
<div class="t" style="left:1915.92px;top:1106.35px;font-size:25.58px;transform:scaleX(0.8800);transform-origin:0 0;color:#c8ccd2;-webkit-text-stroke:0.75px #313645;">C-2</div>
<div class="box" style="left:2072px;top:1096px;width:100px;height:44px"></div>
<div class="t" style="left:2106.95px;top:1106.35px;font-size:25.58px;transform:scaleX(0.8800);transform-origin:0 0;color:#c8ccd2;-webkit-text-stroke:0.75px #313645;">G8</div>
<div class="box" style="left:2362px;top:1096px;width:100px;height:44px"></div>
<div class="t" style="left:2405.63px;top:1106.35px;font-size:25.58px;color:#c8ccd2;-webkit-text-stroke:0.75px #313645;">0</div>
<div class="box" style="left:2550px;top:1096px;width:100px;height:44px"></div>
<div class="t" style="left:2580.99px;top:1106.35px;font-size:25.58px;transform:scaleX(0.8800);transform-origin:0 0;color:#c8ccd2;-webkit-text-stroke:0.75px #313645;">127</div>
<svg style="left:2000px;top:1108px" width="56" height="20" viewBox="2000 1108 56 20"><path d="M2016.6 1111.7 L2010.8 1118 L2016.6 1124.3 M2039.4 1111.7 L2045.2 1118 L2039.4 1124.3" fill="none" stroke="#fff" stroke-width="2.5" stroke-linecap="round" stroke-linejoin="round"/></svg>
<div class="t" style="left:2235.82px;top:1100.90px;font-size:35.32px;transform:scaleX(0.9091);transform-origin:0 0;color:#d4d7dc;-webkit-text-stroke:1.2px #313645;">Velocity</div>
<svg style="left:2490px;top:1096px" width="32" height="44" viewBox="2490 1096 32 44"><path d="M2499.7 1106.7 L2505.9 1100.7 L2512.1 1106.7 M2499.7 1128.5 L2505.9 1134.5 L2512.1 1128.5" fill="none" stroke="#fff" stroke-width="2.4" stroke-linecap="round" stroke-linejoin="round"/></svg>
<svg class="kb" style="left:622.0px;top:1186px" width="2028.0" height="132" viewBox="0 0 2028.0 132"><rect x="4" y="122" width="2020.0" height="2" fill="#232a38"/><g fill="#8f949c"><rect x="25.04" y="89" width="4" height="33"/><rect x="52.08" y="89" width="4" height="33"/><rect x="79.12" y="8" width="4" height="114"/><rect x="106.16" y="89" width="4" height="33"/><rect x="133.20" y="89" width="4" height="33"/><rect x="160.24" y="89" width="4" height="33"/><rect x="187.28" y="8" width="4" height="114"/><rect x="214.32" y="89" width="4" height="33"/><rect x="241.36" y="89" width="4" height="33"/><rect x="268.40" y="8" width="4" height="114"/><rect x="295.44" y="89" width="4" height="33"/><rect x="322.48" y="89" width="4" height="33"/><rect x="349.52" y="89" width="4" height="33"/><rect x="376.56" y="8" width="4" height="114"/><rect x="403.60" y="89" width="4" height="33"/><rect x="430.64" y="89" width="4" height="33"/><rect x="457.68" y="8" width="4" height="114"/><rect x="484.72" y="89" width="4" height="33"/><rect x="511.76" y="89" width="4" height="33"/><rect x="538.80" y="89" width="4" height="33"/><rect x="565.84" y="8" width="4" height="114"/><rect x="592.88" y="89" width="4" height="33"/><rect x="619.92" y="89" width="4" height="33"/><rect x="646.96" y="8" width="4" height="114"/><rect x="674.00" y="89" width="4" height="33"/><rect x="701.04" y="89" width="4" height="33"/><rect x="728.08" y="89" width="4" height="33"/><rect x="755.12" y="8" width="4" height="114"/><rect x="782.16" y="89" width="4" height="33"/><rect x="809.20" y="89" width="4" height="33"/><rect x="836.24" y="8" width="4" height="114"/><rect x="863.28" y="89" width="4" height="33"/><rect x="890.32" y="89" width="4" height="33"/><rect x="917.36" y="89" width="4" height="33"/><rect x="944.40" y="8" width="4" height="114"/><rect x="971.44" y="89" width="4" height="33"/><rect x="998.48" y="89" width="4" height="33"/><rect x="1025.52" y="8" width="4" height="114"/><rect x="1052.56" y="89" width="4" height="33"/><rect x="1079.60" y="89" width="4" height="33"/><rect x="1106.64" y="89" width="4" height="33"/><rect x="1133.68" y="8" width="4" height="114"/><rect x="1160.72" y="89" width="4" height="33"/><rect x="1187.76" y="89" width="4" height="33"/><rect x="1214.80" y="8" width="4" height="114"/><rect x="1241.84" y="89" width="4" height="33"/><rect x="1268.88" y="89" width="4" height="33"/><rect x="1295.92" y="89" width="4" height="33"/><rect x="1322.96" y="8" width="4" height="114"/><rect x="1350.00" y="89" width="4" height="33"/><rect x="1377.04" y="89" width="4" height="33"/><rect x="1404.08" y="8" width="4" height="114"/><rect x="1431.12" y="89" width="4" height="33"/><rect x="1458.16" y="89" width="4" height="33"/><rect x="1485.20" y="89" width="4" height="33"/><rect x="1512.24" y="8" width="4" height="114"/><rect x="1539.28" y="89" width="4" height="33"/><rect x="1566.32" y="89" width="4" height="33"/><rect x="1593.36" y="8" width="4" height="114"/><rect x="1620.40" y="89" width="4" height="33"/><rect x="1647.44" y="89" width="4" height="33"/><rect x="1674.48" y="89" width="4" height="33"/><rect x="1701.52" y="8" width="4" height="114"/><rect x="1728.56" y="89" width="4" height="33"/><rect x="1755.60" y="89" width="4" height="33"/><rect x="1782.64" y="8" width="4" height="114"/><rect x="1809.68" y="89" width="4" height="33"/><rect x="1836.72" y="89" width="4" height="33"/><rect x="1863.76" y="89" width="4" height="33"/><rect x="1890.80" y="8" width="4" height="114"/><rect x="1917.84" y="89" width="4" height="33"/><rect x="1944.88" y="89" width="4" height="33"/><rect x="1971.92" y="8" width="4" height="114"/><rect x="1998.96" y="89" width="4" height="33"/><rect x="15.60" y="8" width="19" height="77"/><rect x="46.40" y="8" width="19" height="77"/><rect x="94.80" y="8" width="19" height="77"/><rect x="125.60" y="8" width="19" height="77"/><rect x="156.40" y="8" width="19" height="77"/><rect x="204.88" y="8" width="19" height="77"/><rect x="235.68" y="8" width="19" height="77"/><rect x="284.08" y="8" width="19" height="77"/><rect x="314.88" y="8" width="19" height="77"/><rect x="345.68" y="8" width="19" height="77"/><rect x="394.16" y="8" width="19" height="77"/><rect x="424.96" y="8" width="19" height="77"/><rect x="473.36" y="8" width="19" height="77"/><rect x="504.16" y="8" width="19" height="77"/><rect x="534.96" y="8" width="19" height="77"/><rect x="583.44" y="8" width="19" height="77"/><rect x="614.24" y="8" width="19" height="77"/><rect x="662.64" y="8" width="19" height="77"/><rect x="693.44" y="8" width="19" height="77"/><rect x="724.24" y="8" width="19" height="77"/><rect x="772.72" y="8" width="19" height="77"/><rect x="803.52" y="8" width="19" height="77"/><rect x="851.92" y="8" width="19" height="77"/><rect x="882.72" y="8" width="19" height="77"/><rect x="913.52" y="8" width="19" height="77"/><rect x="962.00" y="8" width="19" height="77"/><rect x="992.80" y="8" width="19" height="77"/><rect x="1041.20" y="8" width="19" height="77"/><rect x="1072.00" y="8" width="19" height="77"/><rect x="1102.80" y="8" width="19" height="77"/><rect x="1151.28" y="8" width="19" height="77"/><rect x="1182.08" y="8" width="19" height="77"/><rect x="1230.48" y="8" width="19" height="77"/><rect x="1261.28" y="8" width="19" height="77"/><rect x="1292.08" y="8" width="19" height="77"/><rect x="1340.56" y="8" width="19" height="77"/><rect x="1371.36" y="8" width="19" height="77"/><rect x="1419.76" y="8" width="19" height="77"/><rect x="1450.56" y="8" width="19" height="77"/><rect x="1481.36" y="8" width="19" height="77"/><rect x="1529.84" y="8" width="19" height="77"/><rect x="1560.64" y="8" width="19" height="77"/><rect x="1609.04" y="8" width="19" height="77"/><rect x="1639.84" y="8" width="19" height="77"/><rect x="1670.64" y="8" width="19" height="77"/><rect x="1719.12" y="8" width="19" height="77"/><rect x="1749.92" y="8" width="19" height="77"/><rect x="1798.32" y="8" width="19" height="77"/><rect x="1829.12" y="8" width="19" height="77"/><rect x="1859.92" y="8" width="19" height="77"/><rect x="1908.40" y="8" width="19" height="77"/><rect x="1939.20" y="8" width="19" height="77"/><rect x="1987.60" y="8" width="19" height="77"/></g><rect x="4.00" y="4" width="2020.00" height="124" fill="#e5c304" fill-opacity="0.5"/><rect x="2" y="2" width="2024.0" height="128" fill="none" stroke="#e5c304" stroke-width="4"/></svg>
<div class="t" style="left:616.00px;top:1334.21px;font-size:26.45px;transform:scaleX(0.8500);transform-origin:0 0;color:#c2c6cc;-webkit-text-stroke:0.75px #313645;">C-2</div>
<div class="t" style="left:805.27px;top:1334.21px;font-size:26.45px;transform:scaleX(0.8500);transform-origin:0 0;color:#c2c6cc;-webkit-text-stroke:0.75px #313645;">C-1</div>
<div class="t" style="left:994.55px;top:1334.21px;font-size:26.45px;transform:scaleX(0.8500);transform-origin:0 0;color:#c2c6cc;-webkit-text-stroke:0.75px #313645;">C0</div>
<div class="t" style="left:1183.84px;top:1334.21px;font-size:26.45px;transform:scaleX(0.8500);transform-origin:0 0;color:#c2c6cc;-webkit-text-stroke:0.75px #313645;">C1</div>
<div class="t" style="left:1373.11px;top:1334.21px;font-size:26.45px;transform:scaleX(0.8500);transform-origin:0 0;color:#c2c6cc;-webkit-text-stroke:0.75px #313645;">C2</div>
<div class="t" style="left:1562.39px;top:1334.21px;font-size:26.45px;transform:scaleX(0.8500);transform-origin:0 0;color:#c2c6cc;-webkit-text-stroke:0.75px #313645;">C3</div>
<div class="t" style="left:1751.67px;top:1334.21px;font-size:26.45px;transform:scaleX(0.8500);transform-origin:0 0;color:#c2c6cc;-webkit-text-stroke:0.75px #313645;">C4</div>
<div class="t" style="left:1940.95px;top:1334.21px;font-size:26.45px;transform:scaleX(0.8500);transform-origin:0 0;color:#c2c6cc;-webkit-text-stroke:0.75px #313645;">C5</div>
<div class="t" style="left:2130.23px;top:1334.21px;font-size:26.45px;transform:scaleX(0.8500);transform-origin:0 0;color:#c2c6cc;-webkit-text-stroke:0.75px #313645;">C6</div>
<div class="t" style="left:2319.51px;top:1334.21px;font-size:26.45px;transform:scaleX(0.8500);transform-origin:0 0;color:#c2c6cc;-webkit-text-stroke:0.75px #313645;">C7</div>
<div class="t" style="left:2508.80px;top:1334.21px;font-size:26.45px;transform:scaleX(0.8500);transform-origin:0 0;color:#c2c6cc;-webkit-text-stroke:0.75px #313645;">C8</div>
<svg class="hd" style="left:591.0px;top:1221px" width="62" height="62" viewBox="-31 -31 62 62"><circle r="30" fill="#fff"/><g fill="none" stroke="#181e2b" stroke-linecap="round" stroke-linejoin="round"><path d="M-13.7 -5.9L-19.6 0L-13.7 5.9M13.7 -5.9L19.6 0L13.7 5.9" stroke-width="6.4"/><path d="M-19 0H-6.9M19 0H6.9" stroke-width="5.7"/></g></svg>
<svg class="hd" style="left:2619.0px;top:1221px" width="62" height="62" viewBox="-31 -31 62 62"><circle r="30" fill="#fff"/><g fill="none" stroke="#181e2b" stroke-linecap="round" stroke-linejoin="round"><path d="M-13.7 -5.9L-19.6 0L-13.7 5.9M13.7 -5.9L19.6 0L13.7 5.9" stroke-width="6.4"/><path d="M-19 0H-6.9M19 0H6.9" stroke-width="5.7"/></g></svg>
<svg class="hd" style="left:1605.0px;top:1155px" width="62" height="62" viewBox="-31 -31 62 62"><circle r="30" fill="#fff"/><g fill="none" stroke="#181e2b" stroke-linecap="round" stroke-linejoin="round"><path d="M-5.9 -13.7L0 -19.6L5.9 -13.7M-5.9 13.7L0 19.6L5.9 13.7" stroke-width="6.4"/><path d="M0 -19V-6.9M0 19V6.9" stroke-width="5.7"/></g></svg>
<svg class="hd" style="left:1605.0px;top:1287px" width="62" height="62" viewBox="-31 -31 62 62"><circle r="30" fill="#fff"/><g fill="none" stroke="#181e2b" stroke-linecap="round" stroke-linejoin="round"><path d="M-5.9 -13.7L0 -19.6L5.9 -13.7M-5.9 13.7L0 19.6L5.9 13.7" stroke-width="6.4"/><path d="M0 -19V-6.9M0 19V6.9" stroke-width="5.7"/></g></svg>
<div class="a" style="left:0;top:1444px;width:2612px;height:120px;background:#434a63"></div>
<div class="a" style="left:2612px;top:1444px;width:120px;height:120px;background:#fff"></div>
<div class="t" style="left:179.50px;top:1468.80px;font-size:35.32px;transform:scaleX(0.9379);transform-origin:0 0;color:#8b91a1;">Song Rack</div>
<div class="t" style="left:178.34px;top:1513.10px;font-size:35.32px;transform:scaleX(0.9180);transform-origin:0 0;color:#858ca0;-webkit-text-stroke:1.2px #434a63;">Electricity</div>
<svg style="left:2412.21px;top:1483.91px" width="41.80" height="41.80" viewBox="0 0 40 40"><path d="M4 16V4H16M4 4L34 34M22 34H34V22" fill="none" stroke="#5f6679" stroke-width="3.8" stroke-linecap="round" stroke-linejoin="round"/></svg>
<svg style="left:2525px;top:1476px" width="55" height="55" viewBox="2525 1476 55 55"><path d="M2534.3 1521.4 L2536.9 1511.2 L2561.2 1486.9 Q2562.7 1485.6 2564.2 1486.9 L2569.1 1491.8 Q2570.4 1493.3 2569.1 1494.8 L2544.9 1519.0 Z" fill="#fff"/></svg>
<svg style="left:2650px;top:1482px" width="44" height="44" viewBox="2650 1482 44 44"><path d="M2654 1504 H2690 M2672 1486 V1522" stroke="#434a63" stroke-width="4"/></svg>
<div class="a" style="left:0;top:1628px;width:2612px;height:120px;background:#1f2836"></div>
<div class="a" style="left:2612px;top:1628px;width:120px;height:120px;background:#fff"></div>
<div class="t" style="left:179.46px;top:1652.10px;font-size:35.32px;transform:scaleX(0.9636);transform-origin:0 0;color:#7a808c;">Setlist Rack</div>
<div class="t" style="left:178.36px;top:1697.10px;font-size:35.32px;transform:scaleX(0.9101);transform-origin:0 0;color:#626a7a;-webkit-text-stroke:1.2px #1f2836;">Los Angeles Concert</div>
<svg style="left:2412.21px;top:1667.91px" width="41.80" height="41.80" viewBox="0 0 40 40"><path d="M4 16V4H16M4 4L34 34M22 34H34V22" fill="none" stroke="#474e5b" stroke-width="3.8" stroke-linecap="round" stroke-linejoin="round"/></svg>
<svg style="left:2525px;top:1660px" width="55" height="55" viewBox="2525 1660 55 55"><path d="M2534.3 1705.4 L2536.9 1695.2 L2561.2 1670.9 Q2562.7 1669.6 2564.2 1670.9 L2569.1 1675.8 Q2570.4 1677.3 2569.1 1678.8 L2544.9 1703.0 Z" fill="#fff"/></svg>
<svg style="left:2650px;top:1666px" width="44" height="44" viewBox="2650 1666 44 44"><path d="M2654 1688 H2690 M2672 1670 V1706" stroke="#1f2836" stroke-width="4"/></svg>
<div class="a" style="left:0;top:1900px;width:2732px;height:148px;background:#000"></div>
<div class="a" style="left:948px;top:1900px;width:836px;height:148px;background:#1f2836"></div>
<div class="a" style="left:0px;top:1900px;width:156px;height:148px;background:#1f2836"></div>
<div class="t" style="left:47.47px;top:2016.50px;font-size:18.31px;transform:scaleX(0.9173);transform-origin:0 0;color:#fff;">SONGS</div>
<div class="a" style="left:158px;top:1900px;width:156px;height:148px;background:#434a63"></div>
<div class="t" style="left:201.47px;top:2016.50px;font-size:18.31px;transform:scaleX(0.9139);transform-origin:0 0;color:#fff;">SCENES</div>
<div class="a" style="left:316px;top:1900px;width:156px;height:148px;background:#434a63"></div>
<div class="t" style="left:353.51px;top:2016.50px;font-size:18.31px;transform:scaleX(0.9662);transform-origin:0 0;color:#fff;">TIMELINE</div>
<div class="a" style="left:474px;top:1900px;width:156px;height:148px;background:#5e7190"></div>
<div class="t" style="left:518.27px;top:2016.50px;font-size:18.31px;transform:scaleX(0.9501);transform-origin:0 0;color:#fff;">LAYERS</div>
<div class="a" style="left:632px;top:1900px;width:156px;height:148px;background:#ffffff"></div>
<div class="t" style="left:654.50px;top:2016.50px;font-size:18.31px;transform:scaleX(0.9309);transform-origin:0 0;color:#181e2b;">KEY RANGES</div>
<div class="a" style="left:790px;top:1900px;width:156px;height:148px;background:#5e7190"></div>
<div class="t" style="left:809.20px;top:2016.50px;font-size:18.31px;transform:scaleX(0.9670);transform-origin:0 0;color:#fff;">ATTACHMENT</div>
<div class="a" style="left:1786px;top:1900px;width:156px;height:148px;background:#1f2836"></div>
<div class="t" style="left:1811.42px;top:2016.50px;font-size:18.31px;transform:scaleX(0.9379);transform-origin:0 0;color:#fff;">TRANSPORT</div>
<div class="a" style="left:1944px;top:1900px;width:156px;height:148px;background:#1f2836"></div>
<div class="t" style="left:1969.83px;top:2016.50px;font-size:18.31px;transform:scaleX(0.9316);transform-origin:0 0;color:#fff;">TRANSPOSE</div>
<div class="a" style="left:2102px;top:1900px;width:156px;height:148px;background:#1f2836"></div>
<div class="t" style="left:2115.22px;top:2016.50px;font-size:18.31px;transform:scaleX(0.9391);transform-origin:0 0;color:#fff;">TEMPO &amp; SYNC</div>
<div class="a" style="left:2260px;top:1900px;width:156px;height:148px;background:#1f2836"></div>
<div class="t" style="left:2309.13px;top:2016.50px;font-size:18.31px;transform:scaleX(0.9801);transform-origin:0 0;color:#fff;">MIXER</div>
<div class="a" style="left:2418px;top:1900px;width:156px;height:148px;background:#3f4452"></div>
<div class="t" style="left:2453.05px;top:2016.50px;font-size:18.31px;transform:scaleX(0.9351);transform-origin:0 0;color:#fff;">SETTINGS</div>
<div class="a" style="left:2576px;top:1900px;width:156px;height:148px;background:#d0021b"></div>
<div class="t" style="left:2627.04px;top:2016.50px;font-size:18.31px;transform:scaleX(0.9712);transform-origin:0 0;color:#fff;">PANIC</div>
<div class="a" style="left:1021px;top:2022px;width:690px;height:11px;border-radius:6px;background:#8a9099"></div>
<div class="t" style="left:1794.88px;top:1941.13px;font-size:54.07px;transform:scaleX(1.0099);transform-origin:0 0;color:#ffffff;">00:13</div>

<svg style="left:0;top:1900px" width="2732" height="148" viewBox="0 1900 2732 148">
<g fill="#fff">
 <circle cx="62.5" cy="1978.1" r="8.7"/><circle cx="93.6" cy="1972.6" r="8.7"/>
 <path d="M66.8 1942.7 L102.3 1936.9 V1972 H97.9 V1953 L71.2 1957.8 V1978 H66.8 Z M71.2 1947.2 V1952.8 L97.9 1947.7 V1942.3 Z" fill-rule="evenodd"/>
</g>
<g fill="none" stroke="#fff">
 <rect x="215.9" y="1958.9" width="45.3" height="26.4" stroke-width="3.6"/>
 <path d="M221 1968.2 H250 M228.3 1976.9 H253.2" stroke-width="3.8"/>
</g>
<path d="M216 1946 L255 1937 Q259.8 1935.8 260.9 1940.5 L261.8 1946 L215.8 1956.4 Z" fill="#fff"/>
<path d="M213 1952 Q213 1947 217 1946 L219 1956 L213.5 1956.5 Z" fill="#fff"/>
<circle cx="212.1" cy="1955.6" r="3.4" fill="#fff"/>
<path d="M220 1953 L221.1 1947.2 M230.9 1950.8 L232 1944.9 M241.7 1948.6 L242.8 1942.2 M252.6 1946.6 L253.7 1940.2" stroke="#434a63" stroke-width="2.8"/>
<g fill="none" stroke="#fff" stroke-width="2.4">
 <circle cx="398.5" cy="1971.9" r="20.5"/>
 <circle cx="398.5" cy="1971.9" r="5.7"/>
</g>
<ellipse cx="378.3" cy="1973.6" rx="10" ry="7.6" transform="rotate(-15 378.3 1973.6)" fill="#fff"/>
<path d="M386.2 1936 L404 1929.7 V1940.5 L389 1946.3 V1973 H386.2 Z" fill="#fff"/>
<g stroke="#fff" stroke-width="5" stroke-linecap="round">
 <path d="M527.5 1943.7 H576.5 M527.5 1961.9 H576.5 M527.5 1980.3 H576.5"/>
</g>
<g fill="#5e7190" stroke="#fff" stroke-width="4.2">
 <circle cx="556.4" cy="1943.7" r="4.8"/><circle cx="542.8" cy="1961.9" r="4.8"/><circle cx="568" cy="1980.3" r="4.8"/>
</g>
<g fill="#181e2b">
 <path d="M671 1938 H721 V1985.8 H671 Z M675 1942 V1981.8 H717 V1942 Z" fill-rule="evenodd"/>
 <rect x="682.3" y="1940" width="5.4" height="29.2"/><rect x="693.5" y="1940" width="5.4" height="29.2"/><rect x="704.3" y="1940" width="5.4" height="29.2"/>
 <rect x="684" y="1969" width="2" height="14"/><rect x="694.8" y="1969" width="2" height="14"/><rect x="706" y="1969" width="2" height="14"/>
 <rect x="723.4" y="1938.2" width="3.6" height="3.6"/><rect x="723.4" y="1982.2" width="3.6" height="3.6"/><rect x="731.6" y="1938.2" width="3.6" height="3.6"/><rect x="731.6" y="1982.2" width="3.6" height="3.6"/><rect x="739.5" y="1938.2" width="3.6" height="3.6"/><rect x="739.5" y="1982.2" width="3.6" height="3.6"/><rect x="745.3" y="1938.2" width="3.6" height="3.6"/><rect x="745.3" y="1945.6" width="3.6" height="3.6"/><rect x="745.3" y="1953.3" width="3.6" height="3.6"/><rect x="745.3" y="1961" width="3.6" height="3.6"/><rect x="745.3" y="1968.6" width="3.6" height="3.6"/><rect x="745.3" y="1976.3" width="3.6" height="3.6"/><rect x="745.3" y="1982.2" width="3.6" height="3.6"/>
</g>
<path d="M850.4 1938.7 H875.5 L885.5 1948 V1985.3 H850.4 Z M875.5 1938.7 V1948 H885.5" fill="none" stroke="#fff" stroke-width="3.6" stroke-linejoin="round"/>
<g fill="#fff">
 <path d="M1997.6 1932 H2000.4 V1968.5 Q2007 1962 2014.5 1962.5 Q2022.5 1963.5 2022 1970.5 Q2021 1979 2011 1985.5 Q2004 1990 1997.6 1992.5 Z M2000.4 1975 V1987.5 Q2008 1983 2012.5 1977.5 Q2016 1972 2014 1968.5 Q2011.5 1965.5 2006 1967.5 Q2002.5 1969.5 2000.4 1975 Z" fill-rule="evenodd"/>
</g>
<path d="M2034 1935 L2031 1960 M2043 1935 L2040 1960 M2027 1943 H2046 M2026 1952.5 H2045" stroke="#fff" stroke-width="2.6"/>
<g fill="none" stroke="#fff" stroke-width="2.8" stroke-linejoin="round" stroke-linecap="butt">
 <path d="M2189 1953.2 L2180 1933 L2158.4 1990 H2201.8 L2192.2 1961.5"/>
 <path d="M2174.8 1946.8 H2185.4 M2163 1977.7 H2197.2"/>
 <path d="M2180.6 1977 L2191.6 1950.4"/>
 <circle cx="2193.6" cy="1946" r="3.8"/>
</g>
<g fill="#fff">
 <rect x="2312.2" y="1951.2" width="9.2" height="21.5"/><path d="M2322.9 1951.2 L2339 1940.7 V1983.3 L2322.9 1972.7 Z"/>
</g>
<path d="M2346 1949.5 Q2356 1962 2346 1974.5 M2353 1941 Q2371 1962 2353 1983" fill="none" stroke="#fff" stroke-width="3.4" stroke-linecap="round"/>
<g fill="none" stroke="#fff" stroke-width="3">
 <circle cx="2496.1" cy="1961.8" r="10.5"/>
</g>
<path id="gear" fill="none" stroke="#fff" stroke-width="3" stroke-linejoin="round" d="M2513.18 1957.98 L2519.59 1958.65 L2519.59 1964.95 L2513.18 1965.62 L2510.88 1971.18 L2514.94 1976.18 L2510.48 1980.64 L2505.48 1976.58 L2499.92 1978.88 L2499.25 1985.29 L2492.95 1985.29 L2492.28 1978.88 L2486.72 1976.58 L2481.72 1980.64 L2477.26 1976.18 L2481.32 1971.18 L2479.02 1965.62 L2472.61 1964.95 L2472.61 1958.65 L2479.02 1957.98 L2481.32 1952.42 L2477.26 1947.42 L2481.72 1942.96 L2486.72 1947.02 L2492.28 1944.72 L2492.95 1938.31 L2499.25 1938.31 L2499.92 1944.72 L2505.48 1947.02 L2510.48 1942.96 L2514.94 1947.42 L2510.88 1952.42 Z"/>
<circle cx="2530.9" cy="1936.9" r="16.7" fill="#ef5350"/>
<rect x="2528.3" y="1925" width="5.2" height="14.5" rx="2.6" fill="#fff"/>
<circle cx="2530.9" cy="1944.6" r="3" fill="#fff"/>
<path d="M2654 1937.3 L2679 1986.8 H2629.2 Z" fill="#fff"/>
<rect x="2651.3" y="1954.7" width="5.4" height="18" fill="#d0021b"/>
<circle cx="2654" cy="1977.5" r="3" fill="#d0021b"/>
</svg>
</body></html>
